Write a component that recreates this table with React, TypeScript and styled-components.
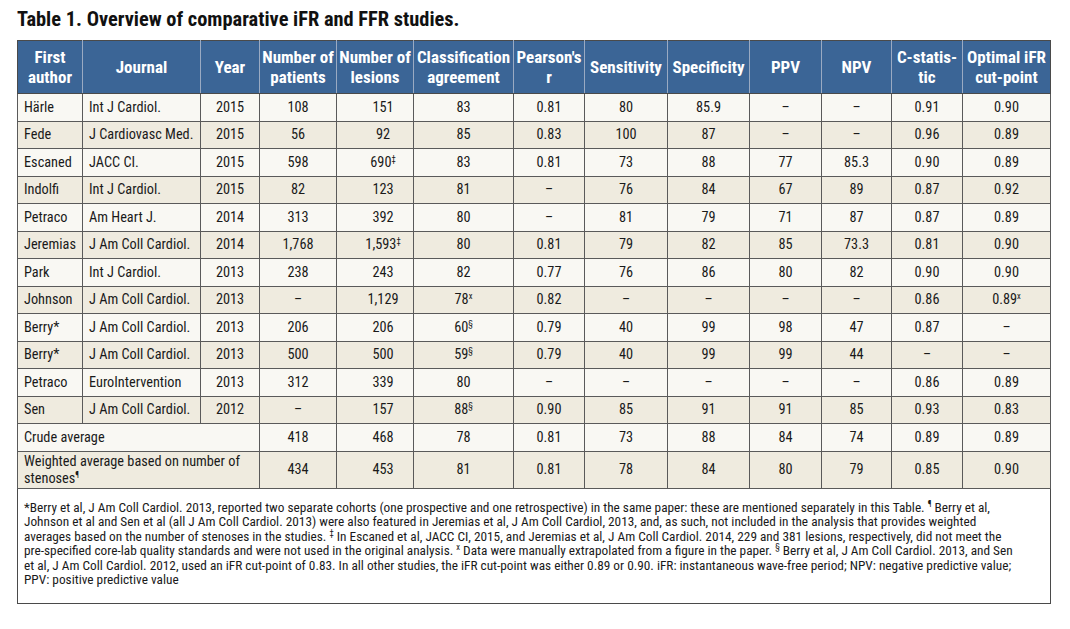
import styled, { createGlobalStyle } from "styled-components";

const GlobalStyle = createGlobalStyle`
  body {
    margin: 0;
    background: #ffffff;
    font-family: "Roboto", "Liberation Sans", sans-serif;
    font-stretch: condensed;
    color: #1a1a1a;
  }
`;

type Row = string[];

const colWidths = [65, 118, 59, 77, 77, 100, 71, 83, 82, 72, 70, 71, 88];

const headers = [
  "First author",
  "Journal",
  "Year",
  "Number of patients",
  "Number of lesions",
  "Classification agreement",
  "Pearson's r",
  "Sensitivity",
  "Specificity",
  "PPV",
  "NPV",
  "C-statis-tic",
  "Optimal iFR cut-point",
];

const rows: Row[] = [
  ["Härle", "Int J Cardiol.", "2015", "108", "151", "83", "0.81", "80", "85.9", "–", "–", "0.91", "0.90"],
  ["Fede", "J Cardiovasc Med.", "2015", "56", "92", "85", "0.83", "100", "87", "–", "–", "0.96", "0.89"],
  ["Escaned", "JACC CI.", "2015", "598", "690^‡", "83", "0.81", "73", "88", "77", "85.3", "0.90", "0.89"],
  ["Indolfi", "Int J Cardiol.", "2015", "82", "123", "81", "–", "76", "84", "67", "89", "0.87", "0.92"],
  ["Petraco", "Am Heart J.", "2014", "313", "392", "80", "–", "81", "79", "71", "87", "0.87", "0.89"],
  ["Jeremias", "J Am Coll Cardiol.", "2014", "1,768", "1,593^‡", "80", "0.81", "79", "82", "85", "73.3", "0.81", "0.90"],
  ["Park", "Int J Cardiol.", "2013", "238", "243", "82", "0.77", "76", "86", "80", "82", "0.90", "0.90"],
  ["Johnson", "J Am Coll Cardiol.", "2013", "–", "1,129", "78^x", "0.82", "–", "–", "–", "–", "0.86", "0.89^x"],
  ["Berry*", "J Am Coll Cardiol.", "2013", "206", "206", "60^§", "0.79", "40", "99", "98", "47", "0.87", "–"],
  ["Berry*", "J Am Coll Cardiol.", "2013", "500", "500", "59^§", "0.79", "40", "99", "99", "44", "–", "–"],
  ["Petraco", "EuroIntervention", "2013", "312", "339", "80", "–", "–", "–", "–", "–", "0.86", "0.89"],
  ["Sen", "J Am Coll Cardiol.", "2012", "–", "157", "88^§", "0.90", "85", "91", "91", "85", "0.93", "0.83"],
];

const crude = ["418", "468", "78", "0.81", "73", "88", "84", "74", "0.89", "0.89"];
const weighted = ["434", "453", "81", "0.81", "78", "84", "80", "79", "0.85", "0.90"];

const Page = styled.div`
  padding: 9px 20px 0 17px;
`;

const Title = styled.h1`
  margin: 0 0 10px 0;
  font-size: 20.4px;
  font-weight: bold;
  line-height: 21px;
  color: #111;
`;

const Table = styled.table`
  border-collapse: collapse;
  table-layout: fixed;
  width: 1033px;
  border: 1px solid #4a4a4a;
`;

const HeadCell = styled.th`
  background: #3b6596;
  color: #ffffff;
  font-weight: bold;
  font-size: 17px;
  line-height: 20px;
  height: 52px;
  padding: 0 1px;
  text-align: center;
  border-left: 1px solid #9aaac2;
  border-bottom: 1px solid #4a4a4a;
  &:first-child {
    border-left: none;
  }
`;

const BodyRow = styled.tr<{ $alt: boolean; $tall?: boolean }>`
  background: ${(p) => (p.$alt ? "#efebdf" : "#f9f8f3")};
  height: ${(p) => (p.$tall ? "37px" : "27.5px")};
`;

const Cell = styled.td<{ $left?: boolean; $shift?: boolean }>`
  font-size: 14.3px;
  line-height: 17px;
  padding: ${(p) => (p.$left ? "0 0 0 6px" : p.$shift ? "0 0 0 16px" : "0 2px")};
  text-align: ${(p) => (p.$left ? "left" : "center")};
  border: 1px solid #5a5a5a;
  white-space: nowrap;
`;

const WrapCell = styled(Cell)`
  white-space: normal;
  padding-right: 8px;
`;

const Sup = styled.sup`
  font-size: 8.5px;
  line-height: 0;
  vertical-align: 5px;
`;

const NoteCell = styled.td`
  background: #ffffff;
  border: 1px solid #4a4a4a;
  padding: 12px 28px 4px 6px;
  font-size: 13.3px;
  line-height: 14.5px;
  height: 115px;
  vertical-align: top;
  box-sizing: border-box;
`;

const renderValue = (value: string) => {
  const [base, sup] = value.split("^");
  return (
    <>
      {base}
      {sup && <Sup>{sup}</Sup>}
    </>
  );
};

export default function App() {
  return (
    <>
      <GlobalStyle />
      <Page>
        <Title>Table 1. Overview of comparative iFR and FFR studies.</Title>
        <Table>
          <colgroup>
            {colWidths.map((w, i) => (
              <col key={i} style={{ width: w }} />
            ))}
          </colgroup>
          <thead>
            <tr>
              {headers.map((h) => (
                <HeadCell key={h}>{h}</HeadCell>
              ))}
            </tr>
          </thead>
          <tbody>
            {rows.map((row, r) => (
              <BodyRow key={r} $alt={r % 2 === 1}>
                {row.map((v, c) => (
                  <Cell key={c} $left={c < 2} $shift={c === 4}>
                    {renderValue(v)}
                  </Cell>
                ))}
              </BodyRow>
            ))}
            <BodyRow $alt={false}>
              <Cell $left colSpan={3}>
                Crude average
              </Cell>
              {crude.map((v, c) => (
                <Cell key={c} $shift={c === 1}>
                  {v}
                </Cell>
              ))}
            </BodyRow>
            <BodyRow $alt $tall>
              <WrapCell $left colSpan={3}>
                Weighted average based on number of stenoses<Sup>¶</Sup>
              </WrapCell>
              {weighted.map((v, c) => (
                <Cell key={c} $shift={c === 1}>
                  {v}
                </Cell>
              ))}
            </BodyRow>
            <tr>
              <NoteCell colSpan={13}>
                *Berry et al, J Am Coll Cardiol. 2013, reported two separate cohorts (one prospective and one
                retrospective) in the same paper: these are mentioned separately in this Table. <Sup>¶</Sup> Berry et al,
                Johnson et al and Sen et al (all J Am Coll Cardiol. 2013) were also featured in Jeremias et al, J Am Coll
                Cardiol, 2013, and, as such, not included in the analysis that provides weighted averages based on the
                number of stenoses in the studies. <Sup>‡</Sup> In Escaned et al, JACC CI, 2015, and Jeremias et al, J Am
                Coll Cardiol. 2014, 229 and 381 lesions, respectively, did not meet the pre-specified core-lab quality
                standards and were not used in the original analysis. <Sup>x</Sup> Data were manually extrapolated from a
                figure in the paper. <Sup>§</Sup> Berry et al, J Am Coll Cardiol. 2013, and Sen et al, J Am Coll Cardiol.
                2012, used an iFR cut-point of 0.83. In all other studies, the iFR cut-point was either 0.89 or 0.90. iFR:
                instantaneous wave-free period; NPV: negative predictive value; PPV: positive predictive value
              </NoteCell>
            </tr>
          </tbody>
        </Table>
      </Page>
    </>
  );
}
